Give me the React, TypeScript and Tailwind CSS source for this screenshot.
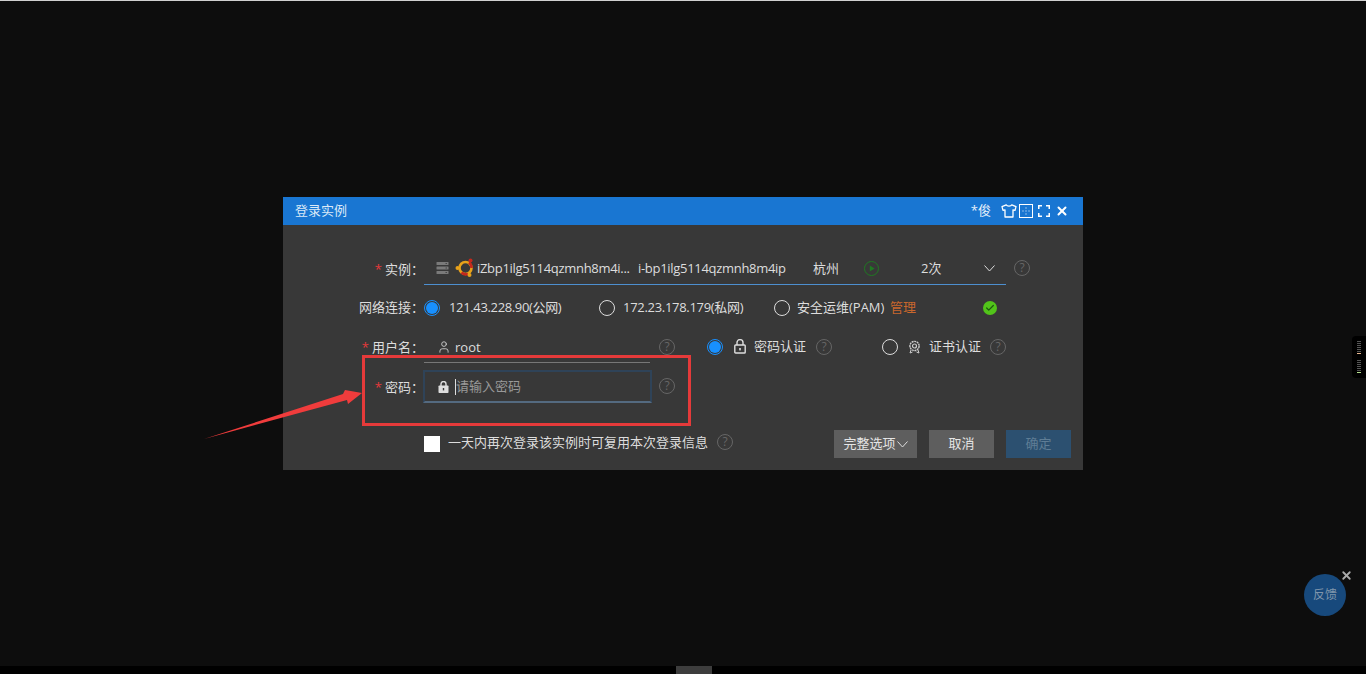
import { Check, User, X } from "lucide-react";

function Help({ className = "" }: { className?: string }) {
  return (
    <span
      className={`flex h-[16px] w-[16px] shrink-0 items-center justify-center rounded-full border border-[#666] text-[12px] leading-none text-[#666] ${className}`}
    >
      ?
    </span>
  );
}

function Radio({ on = false, className = "" }: { on?: boolean; className?: string }) {
  if (on) {
    return (
      <span className={`flex h-[16px] w-[16px] shrink-0 items-center justify-center rounded-full border border-[#1890ff] ${className}`}>
        <span className="h-[12px] w-[12px] rounded-full bg-[#1890ff]" />
      </span>
    );
  }
  return <span className={`block h-[16px] w-[16px] shrink-0 rounded-full border border-[#ddd] ${className}`} />;
}

function Label({ text, star = true, className = "" }: { text: string; star?: boolean; className?: string }) {
  return (
    <div className={`flex w-[141px] shrink-0 items-center justify-end text-[#ddd] ${className}`}>
      {star && <span className="mr-[3px] text-[#e5383b]">*</span>}
      <span>{text}：</span>
    </div>
  );
}

function UbuntuLogo() {
  return (
    <svg width="20" height="20" viewBox="0 0 20 20" className="shrink-0">
      <circle cx="10.5" cy="10" r="6" fill="none" stroke="#e8a21a" strokeWidth="2.6" />
      <path d="M14 4.5 A6.5 6.5 0 0 1 16.5 10" fill="none" stroke="#c5281c" strokeWidth="2.6" />
      <path d="M6.5 14.5 A6.5 6.5 0 0 0 13 16" fill="none" stroke="#c5281c" strokeWidth="2.6" />
      <circle cx="2.5" cy="10" r="2" fill="#e8a21a" />
      <circle cx="15.5" cy="2.5" r="2" fill="#c5281c" />
      <circle cx="14.5" cy="17" r="2" fill="#e8a21a" />
    </svg>
  );
}

function ServerIcon() {
  return (
    <svg width="13" height="12" viewBox="0 0 13 12" className="shrink-0">
      <rect x="0.5" y="0" width="12" height="3" rx="0.5" fill="#7a7a7a" />
      <rect x="0.5" y="4.5" width="12" height="3" rx="0.5" fill="#7a7a7a" />
      <rect x="0.5" y="9" width="12" height="3" rx="0.5" fill="#7a7a7a" />
      <path d="M9.5 1.5h1.5M9.5 6h1.5M9.5 10.5h1.5" stroke="#383838" strokeWidth="0.8" />
    </svg>
  );
}

function BadgeIcon({ className = "" }: { className?: string }) {
  return (
    <svg width="13" height="14" viewBox="0 0 13 14" className={`shrink-0 ${className}`} fill="none" stroke="#ccc">
      <circle cx="6.5" cy="6" r="4.6" strokeWidth="1.4" strokeDasharray="2 0.6" />
      <circle cx="6.5" cy="6" r="2" strokeWidth="1.2" />
      <path d="M3 10 L2 13 L4.5 12 M10 10 L11 13 L8.5 12" strokeWidth="1" />
    </svg>
  );
}

function LockOutline({ className = "" }: { className?: string }) {
  return (
    <svg width="12" height="15" viewBox="0 0 12 15" className={`shrink-0 ${className}`} fill="none" stroke="#ddd" strokeWidth="1.4">
      <rect x="0.8" y="6" width="10.4" height="8" rx="0.8" />
      <path d="M3 6V3.6a3 3 0 0 1 6 0V6" />
      <rect x="5.2" y="9" width="1.6" height="2.4" fill="#ddd" stroke="none" />
    </svg>
  );
}

function LockSolid() {
  return (
    <svg width="11" height="12" viewBox="0 0 11 12" className="shrink-0">
      <path d="M3 5V3a2.5 2.5 0 0 1 5 0V5" fill="none" stroke="#ddd" strokeWidth="1.4" />
      <rect x="0.5" y="4.5" width="10" height="7.5" rx="0.8" fill="#ddd" />
      <rect x="4.8" y="7" width="1.4" height="2.4" fill="#383838" />
    </svg>
  );
}

function Tee() {
  return (
    <svg width="16" height="14" viewBox="0 0 16 14" className="shrink-0" fill="none" stroke="#fff" strokeWidth="1.3" strokeLinejoin="round">
      <path d="M5.2 0.8 C6 2.6 10 2.6 10.8 0.8 L15 2.6 L14 6.4 L12 5.8 V13 H4 V5.8 L2 6.4 L1 2.6 Z" />
    </svg>
  );
}

function LayoutIcon() {
  return (
    <svg width="14" height="14" viewBox="0 0 14 14" fill="none" stroke="#fff" className="shrink-0">
      <rect x="0.5" y="0.5" width="13" height="13" strokeWidth="1" />
      <path d="M7 3.5v1M7 6.5v1M7 9.5v1M3.5 7h1M9.5 7h1" strokeWidth="1" />
    </svg>
  );
}

function FullscreenIcon() {
  return (
    <svg width="12" height="12" viewBox="0 0 12 12" fill="none" stroke="#fff" strokeWidth="1.5" className="shrink-0">
      <path d="M0.75 4V0.75H4M8 0.75h3.25V4M11.25 8v3.25H8M4 11.25H0.75V8" />
    </svg>
  );
}

function Vee({ className = "" }: { className?: string }) {
  return (
    <svg width="11" height="7" viewBox="0 0 11 7" fill="none" stroke="#ddd" strokeWidth="1" className={`shrink-0 ${className}`}>
      <path d="M0.5 0.5 L5.5 6 L10.5 0.5" />
    </svg>
  );
}

function PlayCircle() {
  return (
    <svg width="15" height="15" viewBox="0 0 15 15" className="shrink-0">
      <circle cx="7.5" cy="7.5" r="7" fill="none" stroke="#1f7a22" strokeWidth="1" />
      <path d="M5.8 4.4 L10.6 7.5 L5.8 10.6 Z" fill="#1f7a22" />
    </svg>
  );
}

export default function App() {
  return (
    <div
      className="relative flex h-[674px] w-[1366px] flex-col overflow-hidden bg-[#0d0d0d] text-[13px]"
      style={{ fontFamily: '"Open Sans", "Noto Sans CJK SC", sans-serif' }}
    >
      <div className="h-px bg-[#d0d0d0]" />
      <div className="flex flex-1 justify-center pt-[196px]">
        {/* dialog */}
        <div className="h-[273px] w-[800px] bg-[#383838]">
          <div className="flex h-[28px] items-center bg-[#1976d2] pl-[12px] pr-[14px] text-white">
            <span className="flex-1 text-[#dbe9f7]">登录实例</span>
            <span className="mr-[10px] text-[#e6f0fa]">*俊</span>
            <Tee />
            <span className="ml-[2px]">
              <LayoutIcon />
            </span>
            <span className="ml-[5px] mr-[5px]">
              <FullscreenIcon />
            </span>
            <X size={14} strokeWidth={3.4} />
          </div>

          <div className="mt-[27px] flex h-[33px]">
            <Label text="实例" className="pt-[2px]" />
            <div className="flex w-[582px] items-center border-b border-[#4d8fd0] pl-[12px] text-[#ddd]">
              <ServerIcon />
              <span className="ml-[6px]">
                <UbuntuLogo />
              </span>
              <span className="ml-[2px] w-[161px] whitespace-nowrap pt-[2px] tracking-[-0.3px]">iZbp1ilg5114qzmnh8m4i...</span>
              <span className="w-[175px] whitespace-nowrap pt-[2px] tracking-[-0.3px]">i-bp1ilg5114qzmnh8m4ip</span>
              <span className="w-[51px] pt-[2px]">杭州</span>
              <PlayCircle />
              <span className="ml-[42px] w-[63px] pt-[2px]">2次</span>
              <Vee />
            </div>
            <Help className="ml-[8px] mt-[8px]" />
          </div>

          <div className="flex h-[46px] items-center">
            <Label text="网络连接" star={false} />
            <Radio on />
            <span className="ml-[9px] w-[150px] tracking-[-0.35px] text-[#ddd]">121.43.228.90(公网)</span>
            <Radio />
            <span className="ml-[8px] w-[151px] tracking-[-0.3px] text-[#ddd]">172.23.178.179(私网)</span>
            <Radio />
            <span className="ml-[7px] w-[93px] whitespace-nowrap text-[#ddd]">安全运维(PAM)</span>
            <span className="w-[93px] text-[#c8672d]">管理</span>
            <span className="flex h-[14px] w-[14px] items-center justify-center rounded-full bg-[#52c41a]">
              <Check size={10} strokeWidth={3} className="text-[#1c5a10]" />
            </span>
          </div>

          <div className="flex h-[31px] items-center">
            <Label text="用户名" className="pt-[2px]" />
            <div className="flex w-[235px] items-center pl-[13px] text-[#ddd]">
              <User size={14} strokeWidth={1.4} />
              <span className="ml-[4px] pt-[2px]">root</span>
            </div>
            <Help />
            <Radio on className="ml-[32px]" />
            <LockOutline className="ml-[11px]" />
            <span className="ml-[8px] pt-[1px] text-[#ddd]">密码认证</span>
            <Help className="ml-[10px]" />
            <Radio className="ml-[50px]" />
            <BadgeIcon className="ml-[10px]" />
            <span className="ml-[8px] pt-[1px] text-[#ddd]">证书认证</span>
            <Help className="ml-[9px]" />
          </div>

          <div className="ml-[141px] h-px w-[226px] bg-[#777]" />

          <div className="flex h-[47px] items-start pt-[7px]">
            <div className="flex h-[33px]">
              <Label text="密码" className="pt-[2px]" />
            </div>
            <div className="-ml-px flex h-[33px] w-[229px] items-center border-2 border-[#2f4358] border-b-[#546a80] pl-[13px] text-[#999]">
              <LockSolid />
              <span className="ml-[6px] h-[16px] w-px bg-[#ddd]" />
              <span className="pt-[1px]">请输入密码</span>
            </div>
            <Help className="ml-[7px] mt-[8px]" />
          </div>

          <div className="mt-[20px] flex h-[28px] items-center">
            <span className="ml-[141px] h-[16px] w-[16px] bg-white" />
            <span className="ml-[8px] mb-[2px] text-[#ddd]">一天内再次登录该实例时可复用本次登录信息</span>
            <Help className="ml-[9px] mb-[4px]" />
            <div className="ml-auto mr-[12px] flex gap-[12px]">
              <button className="flex h-[28px] w-[83px] items-center justify-center bg-[#5e5e5e] text-[#e5e5e5]">
                完整选项
                <Vee className="ml-px" />
              </button>
              <button className="h-[28px] w-[65px] bg-[#5e5e5e] text-[#e5e5e5]">取消</button>
              <button className="h-[28px] w-[65px] bg-[#2c5070] text-[#5f7d95]">确定</button>
            </div>
          </div>
        </div>
      </div>

      {/* taskbar edge */}
      <div className="flex h-[8px] bg-black">
        <span className="ml-[676px] h-[8px] w-[36px] bg-[#3d3d3d]" />
      </div>

      {/* annotation */}
      <div className="absolute left-[362px] top-[355px] h-[71px] w-[329px] border-[3px] border-[#e53a3a]" />
      <svg className="absolute left-[200px] top-[385px]" width="170" height="60" viewBox="0 0 170 60">
        <path d="M4 54 L143 9 L145 5 L162 8 L148 19 L147 15 Z" fill="#f03c3c" />
      </svg>

      {/* feedback */}
      <div className="absolute left-[1304px] top-[574px] flex h-[42px] w-[42px] items-center justify-center rounded-full bg-[#17497c] text-[12px] text-[#7f95ab]">
        反馈
      </div>
      <X size={13} strokeWidth={3.4} className="absolute left-[1340px] top-[569px] text-[#aaa]" />

      {/* side handle */}
      <div className="absolute left-[1352px] top-[336px] flex h-[42px] w-[14px] flex-col items-center justify-center gap-[1px] rounded-l bg-black">
        <span className="h-px w-[4px] bg-[#555]" />
        <span className="h-px w-[4px] bg-[#555]" />
        <span className="h-px w-[4px] bg-[#555]" />
        <span className="h-px w-[4px] bg-[#555]" />
        <span className="h-px w-[4px] bg-[#555]" />
        <span className="h-px w-[4px] bg-[#555]" />
        <span className="h-px w-[4px] bg-[#e8b48c]" />
        <span className="mt-[5px] h-px w-[4px] bg-[#555]" />
        <span className="h-px w-[4px] bg-[#555]" />
        <span className="h-px w-[4px] bg-[#555]" />
        <span className="h-px w-[4px] bg-[#555]" />
        <span className="h-px w-[4px] bg-[#555]" />
        <span className="h-px w-[4px] bg-[#555]" />
        <span className="h-px w-[4px] bg-[#b4e08c]" />
      </div>
    </div>
  );
}
